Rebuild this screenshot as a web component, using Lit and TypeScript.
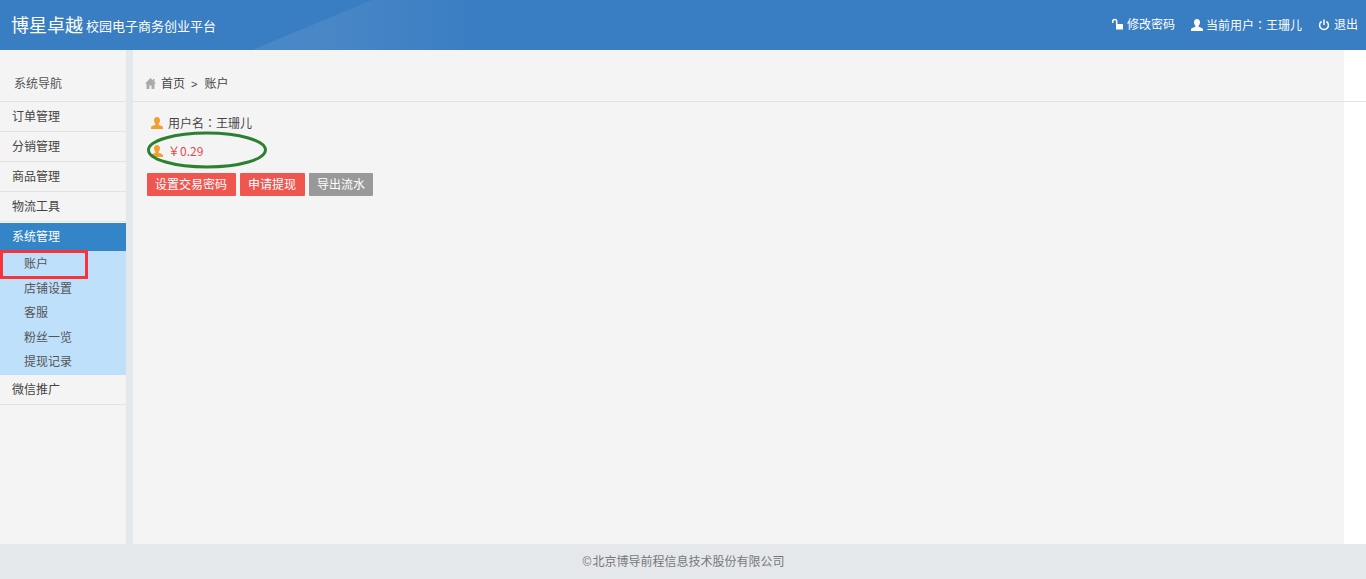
import { LitElement, html, css, svg } from "lit";
import { customElement } from "lit/decorators.js";

const user = (c: string) => svg`<svg class="ic" width="12" height="12" viewBox="0 0 12 12"><path fill="${c}" d="M6 0C7.900 0 9 1.400 9 3.300 9 4.800 8.400 6 7.600 6.700V7.800C8.600 8.400 12 8.800 12 10.500V12H0V10.500C0 8.800 3.400 8.400 4.400 7.800V6.700C3.600 6 3 4.800 3 3.300 3 1.400 4.100 0 6 0Z"/></svg>`;

@customElement("app-root")
export class AppRoot extends LitElement {
  static styles = css`
    :host { display: flex; flex-direction: column; height: 579px; overflow: hidden; background: #fff;
      font: 12px/1.5 "Liberation Sans", "Noto Sans CJK SC", sans-serif; color: #444; }
    .top { position: relative; flex: 0 0 50px; height: 50px; background: #397dc2; color: #fff; display: flex; align-items: center; justify-content: space-between; overflow: hidden; }
    .band { position: absolute; inset: 0; width: 100%; height: 100%; }
    .brand { position: relative; display: flex; align-items: center; padding-left: 11px; }
    .brand b { font-weight: 400; font-size: 18px; margin-right: 3px; padding-top: 2px; }
    .brand span { font-size: 13px; padding-top: 4px; }
    .tools { position: relative; display: flex; align-items: center; padding-right: 8px; }
    .tools a { display: flex; align-items: center; gap: 3px; margin-left: 16px; }
    .c { font-family: "Noto Sans CJK TC", sans-serif; }
    .main { flex: 1; display: flex; min-height: 0; position: relative; }
    .side { flex: 0 0 126px; background: #f4f4f4; }
    .side h4 { margin: 0; height: 52px; box-sizing: border-box; padding: 25px 0 0 14px; font-weight: 400; font-size: 12px; line-height: 18px; color: #555; border-bottom: 1px solid #e2e2e2; }
    .item { height: 30px; box-sizing: border-box; padding: 1px 0 0 12px; line-height: 29px; border-bottom: 1px solid #e2e2e2; color: #444; }
    .item.on { height: 28px; background: #3385c8; color: #fff; border: 0; margin-top: 1px; padding-top: 0; line-height: 29px; }
    .subs { background: #bfe0fb; position: relative; height: 124px; box-sizing: border-box; padding-top: 1px; }
    .sub { height: 24.5px; line-height: 24.5px; padding-left: 24px; color: #555; }
    .mark { position: absolute; left: 0; top: -1px; width: 88px; height: 29px; box-sizing: border-box; border: 3px solid #f9333b; }
    .gap { flex: 0 0 7px; background: #e4e8eb; }
    .content { flex: 0 0 1211px; background: #f4f4f4; }
    .crumb { height: 51px; box-sizing: border-box; padding: 25px 0 0 12px; display: flex; align-items: flex-start; gap: 5px; line-height: 18px; color: #444; }
    .crumb i { font-style: normal; margin: 0 2px 0 1px; font-size: 11px; }
    .rule { position: absolute; left: 133px; right: 0; top: 51px; height: 1px; background: #e2e2e2; }
    .body { padding: 8px 14px; position: relative; }
    .row { display: flex; align-items: center; gap: 5px; height: 28px; padding-left: 4px; box-sizing: border-box; }
    .row.m { color: #e34b4b; font-family: "Noto Sans CJK SC", sans-serif; }
    .ell { position: absolute; left: 14px; top: 30px; }
    .btns { display: flex; gap: 4px; margin-top: 8px; }
    .btn { height: 23px; line-height: 25px; padding: 0 9px 0 8px; color: #fff; background: #f05650; border-radius: 1px; }
    .btn.g { background: #999; padding: 0 8px; }
    .foot { flex: 0 0 35px; height: 35px; min-height: 0; overflow: hidden; background: #e4e8eb; text-align: center; line-height: 36px; color: #777; }
    .cr { display: inline-block; width: 11px; }
    .ic { flex: none; display: block; }
  `;

  render() {
    return html`
      <div class="top">
        <svg class="band" viewBox="0 0 1366 50" preserveAspectRatio="none">
          <defs><linearGradient id="g" gradientUnits="userSpaceOnUse" x1="320" x2="480" y1="0" y2="0"><stop offset="0" stop-color="#4a87c7"/><stop offset="1" stop-color="#397dc2"/></linearGradient></defs>
          <polygon points="252,50 372,0 480,0 480,50" fill="url(#g)"/>
        </svg>
        <div class="brand"><b>博星卓越</b><span>校园电子商务创业平台</span></div>
        <div class="tools">
          <a><svg class="ic" width="13" height="14" viewBox="0 0 13 14"><path fill="#fff" d="M5 6h7v5.500H5z"/><path fill="none" stroke="#fff" stroke-width="1.500" d="M1.700 5V3.500a2 2 0 0 1 4 0V6"/></svg>修改密码</a>
          <a>${user("#fff")}<span>当前用户<span class="c">：</span>王珊儿</span></a>
          <a><svg class="ic" width="13" height="14" viewBox="0 0 13 14"><path fill="none" stroke="#fff" stroke-width="1.500" d="M3.600 3.500a4.400 4.400 0 1 0 4.800 0M6 1.500v5.500"/></svg>退出</a>
        </div>
      </div>
      <div class="main">
        <div class="side">
          <h4>系统导航</h4>
          <div class="item">订单管理</div>
          <div class="item">分销管理</div>
          <div class="item">商品管理</div>
          <div class="item">物流工具</div>
          <div class="item on">系统管理</div>
          <div class="subs">
            <div class="mark"></div>
            <div class="sub">账户</div>
            <div class="sub">店铺设置</div>
            <div class="sub">客服</div>
            <div class="sub">粉丝一览</div>
            <div class="sub">提现记录</div>
          </div>
          <div class="item">微信推广</div>
        </div>
        <div class="gap"></div>
        <div class="content">
          <div class="crumb">
            <svg class="ic" width="11" height="18" viewBox="0 0 11 18"><path fill="#aaa" d="M5.500 3 0 8.500h1.500V14h3v-3.500h2V14h3V8.500H11L9.500 7V4H8v1.500z"/></svg>
            <span>首页</span><i>&gt;</i><span>账户</span>
          </div>
          <div class="body">
            <div class="row">${user("#f0a030")}<span>用户名<span class="c">：</span>王珊儿</span></div>
            <div class="row m">${user("#f0a030")}<span>￥0.29</span></div>
            <svg class="ell" width="120" height="38" viewBox="0 0 120 38"><ellipse cx="60" cy="19" rx="58.500" ry="17" fill="none" stroke="#2c8130" stroke-width="3"/></svg>
            <div class="btns">
              <div class="btn">设置交易密码</div>
              <div class="btn">申请提现</div>
              <div class="btn g">导出流水</div>
            </div>
          </div>
        </div>
        <div class="rule"></div>
      </div>
      <div class="foot"><span class="cr">©</span>北京博导前程信息技术股份有限公司</div>
    `;
  }
}
